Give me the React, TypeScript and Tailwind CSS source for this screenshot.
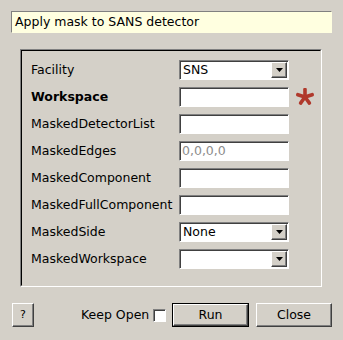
import React from "react";

const sunken =
  "border border-t-[#808080] border-l-[#808080] border-b-white border-r-white shadow-[inset_1px_1px_0_#404040]";
const raised =
  "border border-t-white border-l-white border-b-[#404040] border-r-[#404040] shadow-[inset_-1px_-1px_0_#808080]";

function Arrow() {
  return (
    <div className={`flex h-[16px] w-[16px] items-center justify-center bg-[#d4d0c8] ${raised}`}>
      <svg width="7" height="4" viewBox="0 0 7 4">
        <path d="M0 0h7L3.5 4z" fill="#000" />
      </svg>
    </div>
  );
}

function Combo({ value }: { value?: string }) {
  return (
    <div className={`flex h-[20px] w-[110px] items-center justify-between bg-white pl-[3px] pr-[1px] ${sunken}`}>
      <span className="leading-none text-black">{value}</span>
      <Arrow />
    </div>
  );
}

function Field({ value, grey }: { value?: string; grey?: boolean }) {
  return (
    <div className={`flex h-[20px] w-[110px] items-center bg-white pl-[2px] ${sunken}`}>
      <span className={`leading-none ${grey ? "text-[#8c8c8c]" : "text-black"}`}>{value}</span>
    </div>
  );
}

function Star() {
  // five-armed red asterisk marking a required property
  const arms = [0, 72, 144, 216, 288];
  return (
    <svg width="18" height="18" viewBox="-9 -9 18 18" className="ml-[7px]">
      {arms.map(a => (
        <line
          key={a}
          x1="0"
          y1="0"
          x2={(7.5 * Math.sin((a * Math.PI) / 180)).toFixed(2)}
          y2={(-7.5 * Math.cos((a * Math.PI) / 180)).toFixed(2)}
          stroke="#b0392c"
          strokeWidth="3.6"
          strokeLinecap="round"
        />
      ))}
    </svg>
  );
}

const rows: { label: string; bold?: boolean; kind: "combo" | "field"; value?: string; grey?: boolean; req?: boolean }[] = [
  { label: "Facility", kind: "combo", value: "SNS" },
  { label: "Workspace", bold: true, kind: "field", req: true },
  { label: "MaskedDetectorList", kind: "field" },
  { label: "MaskedEdges", kind: "field", value: "0,0,0,0", grey: true },
  { label: "MaskedComponent", kind: "field" },
  { label: "MaskedFullComponent", kind: "field" },
  { label: "MaskedSide", kind: "combo", value: "None" },
  { label: "MaskedWorkspace", kind: "combo" },
];

export default function App() {
  return (
    <div className="flex h-[340px] w-[343px] flex-col bg-[#d4d0c8] font-['DejaVu_Sans',sans-serif] text-[12.5px] text-black">
      {/* description */}
      <div className="mx-[11px] mt-[11px] flex h-[22px] items-center border border-t-[#808080] border-l-[#808080] border-b-[#ffffe0] border-r-[#ffffe0] bg-[#ffffe0] pl-[3px]">
        Apply mask to SANS detector
      </div>

      {/* properties */}
      <div className="ml-[20px] mr-[21px] mt-[16px] h-[238px] border border-t-[#808080] border-l-[#808080] border-b-white border-r-white">
        <div className="h-full border border-t-black border-l-black border-b-[#d4d0c8] border-r-[#d4d0c8] pl-[9px] pt-[9px]">
          <div className="flex flex-col gap-[7px]">
            {rows.map(r => (
              <div key={r.label} className="flex h-[20px] items-center">
                <span className={`w-[148px] ${r.bold ? "font-bold" : ""}`}>{r.label}</span>
                {r.kind === "combo" ? <Combo value={r.value} /> : <Field value={r.value} grey={r.grey} />}
                {r.req && <Star />}
              </div>
            ))}
          </div>
        </div>
      </div>

      {/* buttons */}
      <div className="mt-[16px] flex h-[24px] items-center pl-[12px]">
        <button className={`flex h-[24px] w-[22px] shrink-0 items-center justify-center bg-[#d4d0c8] text-[11px] ${raised}`}>?</button>
        <span className="ml-[47px] w-[66px] shrink-0 whitespace-nowrap">Keep Open</span>
        <span className={`ml-[6px] h-[13px] w-[13px] shrink-0 bg-white ${sunken}`} />
        <div className="ml-[6px] h-[24px] w-[77px] shrink-0 border border-black">
          <button className={`flex h-full w-full items-center justify-center bg-[#d4d0c8] ${raised}`}>Run</button>
        </div>
        <button className={`ml-[7px] flex h-[24px] w-[76px] shrink-0 items-center justify-center bg-[#d4d0c8] ${raised}`}>Close</button>
      </div>
    </div>
  );
}
